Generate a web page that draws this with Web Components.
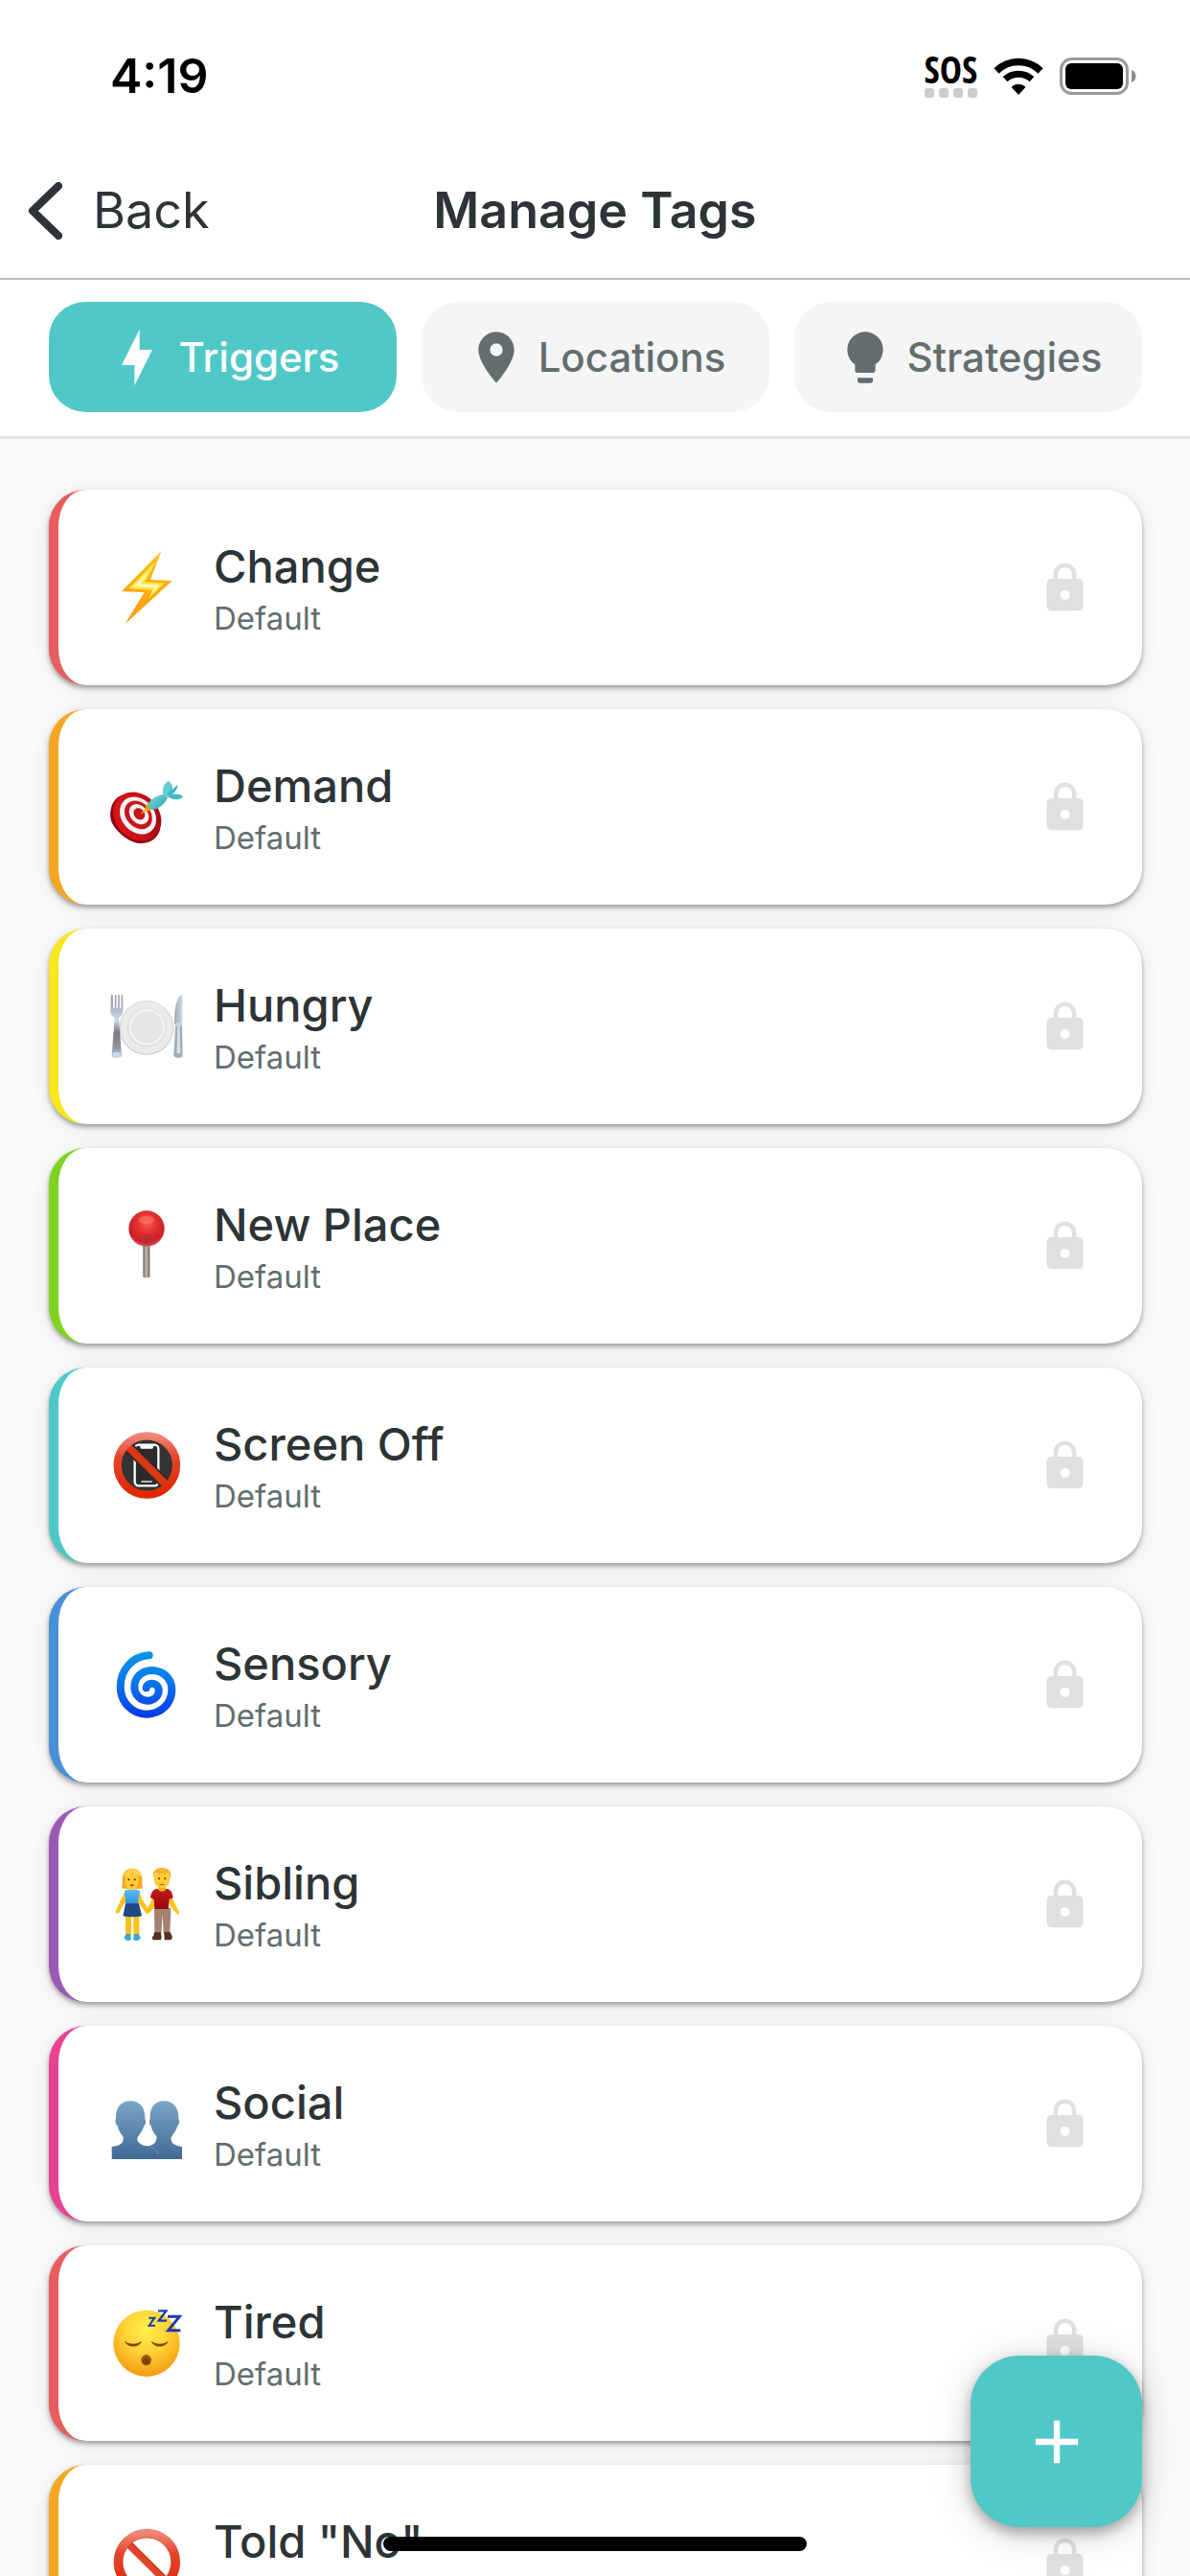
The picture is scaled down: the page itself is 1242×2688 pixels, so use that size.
<!DOCTYPE html>
<html lang="en">
<head>
<meta charset="utf-8">
<meta name="viewport" content="width=device-width, initial-scale=1">
<title>Manage Tags</title>
<style>
  body {
    margin: 0;
    background: #fafafa;
    color: #2d3436;
    font-family: Inter, Roboto, "Liberation Sans", sans-serif;
  }
</style>
</head>
<body>
<tags-app>
  <status-bar slot="top" time="4:19"></status-bar>
  <nav-header slot="top" back="Back">Manage Tags</nav-header>
  <tab-bar slot="top">
    <tab-pill selected>
      <svg slot="icon" viewBox="0 0 24 24"><path d="M11 15H6l7-14v8h5l-7 14z"/></svg>Triggers
    </tab-pill>
    <tab-pill>
      <svg slot="icon" viewBox="0 0 24 24"><path d="M12 2C8.13 2 5 5.13 5 9c0 5.25 7 13 7 13s7-7.75 7-13c0-3.87-3.13-7-7-7zm0 9.5a2.5 2.5 0 0 1 0-5 2.5 2.5 0 0 1 0 5z"/></svg>Locations
    </tab-pill>
    <tab-pill>
      <svg slot="icon" viewBox="0 0 24 24"><path d="M12 2a7 7 0 0 0-7 7c0 2.38 1.19 4.47 3 5.74V17a1 1 0 0 0 1 1h6a1 1 0 0 0 1-1v-2.26c1.81-1.27 3-3.36 3-5.74a7 7 0 0 0-7-7zM9 21a1 1 0 0 0 1 1h4a1 1 0 0 0 1-1v-1H9z"/></svg>Strategies
    </tab-pill>
  </tab-bar>

  <tag-card color="#e85d5d" note="Default">
    <svg slot="icon" viewBox="228 250 228 228">
      <defs><linearGradient id="bolt" x1="0" y1="0" x2="0" y2="1"><stop offset="0" stop-color="#ffc21a"/><stop offset="1" stop-color="#ff9200"/></linearGradient></defs>
      <path d="M388 250 264 376l71 3-60 99 147-135-68-3z" fill="url(#bolt)"/>
      <path d="M372 281 285 368l67 4-46 69 93-91-62-3z" fill="#ffe53d"/>
      <path d="M359 303 300 361l66 4-42 52 61-61-62-3z" fill="#fffab8"/>
      <path d="m351 375 11-7-14 34-54 55z" fill="#ffa51a"/>
    </svg>Change
  </tag-card>
  <tag-card color="#f5a623" note="Default">
    <svg slot="icon" viewBox="228 938 228 228">
      <defs>
        <linearGradient id="rim" x1="0" y1="0" x2="1" y2="1"><stop offset="0" stop-color="#e0161c"/><stop offset=".6" stop-color="#c20f16"/><stop offset="1" stop-color="#8c0a0d"/></linearGradient>
        <linearGradient id="dart" x1="0" y1="0" x2="1" y2="1"><stop offset="0" stop-color="#7fe0e6"/><stop offset="1" stop-color="#2a9ca6"/></linearGradient>
      </defs>
      <path d="M262 1016c-22 8-37 38-33 70 3 32 52 76 88 80 30 2 62-12 68-48z" fill="#8f0a10"/>
      <ellipse cx="313" cy="1082" rx="68" ry="83" transform="rotate(-42 313 1082)" fill="url(#rim)"/>
      <ellipse cx="315" cy="1079" rx="51" ry="64" transform="rotate(-42 315 1079)" fill="#f4f1f1"/>
      <ellipse cx="316" cy="1077" rx="38" ry="49" transform="rotate(-42 316 1077)" fill="#c9151c"/>
      <ellipse cx="318" cy="1075" rx="27" ry="35" transform="rotate(-42 318 1075)" fill="#f4f1f1"/>
      <ellipse cx="319" cy="1074" rx="16" ry="20" transform="rotate(-42 319 1074)" fill="#c9151c"/>
      <path d="m322 1075 24-27 9 9z" fill="#f2c200"/>
      <path d="m338 1052 8-12 16 17-12 7-7-1z" fill="#e0a800"/>
      <path d="M347 1042c10-18 32-28 49-30l12 10c-6 18-24 34-46 39-9-2-15-9-15-19z" fill="url(#dart)"/>
      <path d="M394 1010c-4-16 6-34 18-38 8 8 12 16 10 26l17-16c1 12-8 26-18 30 14-2 28 0 36 7-10 12-30 12-44 4z" fill="#43b9c3"/>
      <path d="M394 1010c-4-16 6-34 18-38 8 12 8 22-6 42z" fill="#65cfd8"/>
    </svg>Demand
  </tag-card>
  <tag-card color="#f8e71c" note="Default">
    <svg slot="icon" viewBox="228 246 228 228">
      <defs>
        <linearGradient id="steel" x1="0" y1="0" x2="0" y2="1"><stop offset="0" stop-color="#8d9299"/><stop offset=".4" stop-color="#c9dbec"/><stop offset=".6" stop-color="#77797d"/><stop offset=".85" stop-color="#94979b"/><stop offset="1" stop-color="#bcd0e6"/></linearGradient>
        <linearGradient id="blade" x1="0" y1="0" x2="1" y2="0"><stop offset="0" stop-color="#9cabb5"/><stop offset="1" stop-color="#cfdce6"/></linearGradient>
      </defs>
      <circle cx="342" cy="365" r="85" fill="#cfcfd1"/>
      <circle cx="342" cy="364" r="82" fill="#ebebec"/>
      <circle cx="342" cy="364" r="60" fill="#d5dbe6"/>
      <circle cx="343" cy="363" r="57" fill="#f5f5f5"/>
      <circle cx="343" cy="363" r="50" fill="#e6e6e6"/>
      <path d="M231 262h5l2 42h4l1-42h4l1 42h4l1-42h4l1 42h4l1-42h4l1 50c0 10-6 18-13 20l9 120c0 8-31 8-31 0l9-120c-8-3-13-10-13-20z" fill="url(#steel)"/>
      <ellipse cx="249" cy="448" rx="13" ry="8" fill="#c3d8ee"/>
      <path d="M454 260c-14 3-26 32-25 94h25z" fill="url(#blade)"/>
      <path d="M432 356h21l2 96c-2 8-26 8-28 0z" fill="#a3adb9"/>
      <path d="M439 360h6l3 84h-11z" fill="#d9e2ec"/>
      <ellipse cx="443" cy="354" rx="11" ry="7" fill="#bcd9f5"/>
    </svg>Hungry
  </tag-card>
  <tag-card color="#7ed321" note="Default">
    <svg slot="icon" viewBox="228 934 228 228">
      <defs>
        <radialGradient id="ball" cx=".5" cy=".35" r=".65"><stop offset="0" stop-color="#f9594e"/><stop offset=".45" stop-color="#e2302e"/><stop offset=".8" stop-color="#c8202a"/><stop offset="1" stop-color="#dd4a55"/></radialGradient>
        <linearGradient id="pin" x1="0" y1="0" x2="1" y2="0"><stop offset="0" stop-color="#6e625e"/><stop offset=".5" stop-color="#c9bdb8"/><stop offset="1" stop-color="#665a57"/></linearGradient>
      </defs>
      <path d="M331 1040h21v104c0 5-21 5-21 0z" fill="url(#pin)"/>
      <circle cx="342" cy="994" r="56" fill="url(#ball)"/>
      <ellipse cx="342" cy="967" rx="25" ry="13" fill="#ff8878" opacity=".45"/>
      <ellipse cx="342" cy="1026" rx="15" ry="17" fill="#a3383a" opacity=".5"/>
    </svg>New Place
  </tag-card>
  <tag-card color="#50c8c8" note="Default">
    <svg slot="icon" viewBox="228 242 228 228">
      <defs><linearGradient id="ring" gradientUnits="objectBoundingBox" x1="0" y1="0" x2="0" y2="1"><stop offset="0" stop-color="#ee8676"/><stop offset=".12" stop-color="#ec6f5c"/><stop offset=".35" stop-color="#e4452c"/><stop offset="1" stop-color="#e02600"/></linearGradient></defs>
      <circle cx="343" cy="356" r="92" fill="#333"/>
      <rect x="305" y="292" width="74" height="128" rx="12" fill="#2b2b2b" stroke="#fff" stroke-width="7"/>
      <path d="M320 294h45l-4 10h-37z" fill="#fff"/>
      <path d="M325 407h34" stroke="#fff" stroke-width="4"/>
      <path d="m279 293 127 126" stroke="#2b2b2b" stroke-width="34"/>
      <path d="m279 293 127 126" stroke="#dd3517" stroke-width="24"/>
      <circle cx="343" cy="356" r="92" fill="none" stroke="url(#ring)" stroke-width="25"/>
    </svg>Screen Off
  </tag-card>
  <tag-card color="#4a90d9" note="Default">
    <svg slot="icon" viewBox="228 930 228 228">
      <defs><linearGradient id="swirl" gradientUnits="userSpaceOnUse" x1="0" y1="940" x2="0" y2="1148"><stop offset="0" stop-color="#0b96e6"/><stop offset=".45" stop-color="#0a78ea"/><stop offset="1" stop-color="#0637ea"/></linearGradient></defs>
      <path d="M350 952C296 955 260 998 260 1050c0 48 36 86 82 86s79-34 79-77c0-36-29-60-63-60-31 0-54 22-54 52 0 24 18 43 41 43 20 0 35-14 35-32 0-13-10-22-22-22-10 0-16 6-17 14" fill="none" stroke="url(#swirl)" stroke-width="24" stroke-linecap="round"/>
    </svg>Sensory
  </tag-card>
  <tag-card color="#9b59b6" note="Default">
    <svg slot="icon" viewBox="228 238 228 228">
      <defs>
        <linearGradient id="shirt" x1="0" y1="0" x2="0" y2="1"><stop offset="0" stop-color="#c21a1c"/><stop offset="1" stop-color="#96080c"/></linearGradient>
        <linearGradient id="top" x1="0" y1="0" x2="0" y2="1"><stop offset="0" stop-color="#5cbcf0"/><stop offset="1" stop-color="#2f93d8"/></linearGradient>
      </defs>
      <path d="M276 385h18v66h-18zM301 385h18v66h-18z" fill="#fcc21b"/>
      <path d="M272 455l6-10h13l3 14c0 10-24 10-22-4zM300 459l3-14h13l7 10c2 14-23 14-23 4z" fill="#3ea6dd"/>
      <path d="M274 315c-10 16-20 38-29 60l4 7 9-6c8-18 18-30 24-42zM318 315c8 14 14 30 24 44l7 20-6 4-12-16c-10-14-18-26-22-34z" fill="#fcc21b"/>
      <path d="M272 312c4-6 14-6 24-6s22 0 26 6l-5 20-1 22h-40l-1-22z" fill="url(#top)"/>
      <path d="M276 350h42l9 39c-18 4-42 4-59 0z" fill="#224785"/>
      <path d="M264 300c4-8 0-26 4-38 4-16 16-22 28-22 20 0 30 14 32 30 1 12-2 22 2 30-8 6-58 6-66 0z" fill="#f6a91c"/>
      <ellipse cx="296" cy="280" rx="21" ry="26" fill="#ffcb38"/>
      <path d="M270 268c6-20 14-28 30-27 14 1 24 10 26 24-12-2-22-6-28-14-4 8-14 14-28 17z" fill="#ffd24f"/>
      <circle cx="286" cy="275" r="3" fill="#4a2a08"/><circle cx="305" cy="275" r="3" fill="#4a2a08"/>
      <ellipse cx="296" cy="293" rx="6" ry="3" fill="#b0441c"/>
      <path d="M366 364h52l-3 80h-20l-3-62-4 62h-21z" fill="#a5826e"/>
      <path d="M366 440h20l3 14-2 10h-22c-8-2-6-10-1-14zM397 440h19l6 12c2 8-2 12-8 12h-16z" fill="#53301f"/>
      <path d="M362 330c-6 12-10 24-18 34l2 18 8-6c8-10 16-22 20-32zM422 330c6 14 12 28 22 46l-3 9-12-11c-10-12-16-24-20-34z" fill="#fcc21b"/>
      <path d="M354 332c2-16 8-27 20-28h31c12 1 18 12 20 28l-12 5-3 30h-43l-2-30z" fill="url(#shirt)"/>
      <path d="M378 290h24v16c-6 8-18 8-24 0z" fill="#f0ad18"/>
      <ellipse cx="390" cy="274" rx="25" ry="28" fill="#ffcb38"/>
      <path d="M363 272c-4-22 6-35 28-34 22 0 30 14 25 34l-6-16c-12 2-30 2-40-2z" fill="#f5b52c"/>
      <circle cx="381" cy="272" r="3" fill="#4a2a08"/><circle cx="400" cy="272" r="3" fill="#4a2a08"/>
      <path d="M382 289q8 5 16 0" fill="none" stroke="#a8541c" stroke-width="3"/>
    </svg>Sibling
  </tag-card>
  <tag-card color="#e84393" note="Default">
    <svg slot="icon" viewBox="228 927 228 228">
      <defs><linearGradient id="bust" gradientUnits="userSpaceOnUse" x1="0" y1="970" x2="0" y2="1152"><stop offset="0" stop-color="#7ba5c6"/><stop offset="1" stop-color="#416a94"/></linearGradient></defs>
      <path d="M396 970c30 0 48 22 46 56 4 4 3 18-3 22-4 14-12 24-18 32-4 6-4 12 0 18 4 9 18 13 32 15v39H334v-39c12-1 30-4 36-15 3-6 4-12 3-18-8-8-14-18-17-32-6-4-7-18-3-22-2-34 13-56 43-56z" fill="url(#bust)"/>
      <path d="M291 970c30 0 48 22 46 56 4 4 3 18-3 22-4 14-12 24-18 32-4 6-4 12 0 18 8 12 24 12 40 16 12 4 20 14 22 38H233v-39c12-1 28-4 34-15 3-6 2-12 1-18-8-8-14-18-17-32-6-4-9-18-5-22-2-34 15-56 45-56z" fill="url(#bust)"/>
      <path d="M350 1112c14 3 24 12 28 26" fill="none" stroke="#7f9dba" stroke-width="2"/>
    </svg>Social
  </tag-card>
  <tag-card color="#e85d5d" note="Default">
    <svg slot="icon" viewBox="228 264 228 228">
      <defs>
        <radialGradient id="face" cx=".5" cy=".3" r=".7"><stop offset="0" stop-color="#fff04d"/><stop offset=".5" stop-color="#ffd133"/><stop offset="1" stop-color="#f39a12"/></radialGradient>
      </defs>
      <circle cx="342" cy="379" r="104" fill="url(#face)"/>
      <path d="M273 371c14 12 40 12 54 0-6 22-46 24-54 0zM356 371c14 12 40 12 54 0-6 22-46 24-54 0z" fill="#7d4a0c"/>
      <ellipse cx="341" cy="431" rx="16" ry="17" fill="#9a5a10"/>
      <ellipse cx="341" cy="435" rx="11" ry="10" fill="#7d430a"/>
      <g fill="none" stroke="#1b3cab" stroke-linejoin="miter">
        <path d="M349 299h18l-17 24h19" stroke-width="6"/>
        <path d="M378 277h25l-23 31h25" stroke-width="7"/>
        <path d="M408 295h37l-35 43h38" stroke-width="9"/>
      </g>
    </svg>Tired
  </tag-card>
  <tag-card color="#f5a623" note="Default">
    <svg slot="icon" viewBox="228 952 228 228">
      <path d="m279 1001 127 126" stroke="#e0452c" stroke-width="24"/>
      <path d="m283 995 127 126" stroke="#b93a25" stroke-width="3"/>
      <circle cx="343" cy="1064" r="90" fill="none" stroke="url(#ring)" stroke-width="28"/>
      <circle cx="343" cy="1064" r="76" fill="none" stroke="#b93a25" stroke-width="2"/>
    </svg>Told "No"
  </tag-card>

  <add-button slot="overlay" label="Add tag"></add-button>
  <home-indicator slot="overlay"></home-indicator>
</tags-app>

<script>
class ShadowElement extends HTMLElement {
  connectedCallback() {
    if (this.shadowRoot) return;
    this.attachShadow({ mode: "open" }).innerHTML = this.render();
  }
}

customElements.define("tags-app", class extends ShadowElement {
  render() {
    return `
      <style>
        :host { display: flex; flex-direction: column; position: relative; height: 100vh; overflow: hidden; background: #fafafa; }
        header { flex: none; background: #fff; border-bottom: 3px solid #e0e0e0; }
        main { flex: 1; min-height: 0; overflow: hidden; display: flex; flex-direction: column; gap: 25px; padding: 53px 50px 0 51px; }
      </style>
      <header><slot name="top"></slot></header>
      <main><slot></slot></main>
      <slot name="overlay"></slot>`;
  }
});

customElements.define("status-bar", class extends ShadowElement {
  render() {
    return `
      <style>
        :host { display: flex; justify-content: space-between; align-items: center; height: 158px; padding: 0 56px 0 115px; color: #000; }
        .time { font-size: 50px; font-weight: 600; line-height: 60px; }
        .icons { display: flex; align-items: center; gap: 17px; }
        .sos { display: flex; flex-direction: column; align-items: center; gap: 4px; }
        .sos b { font: bold 39px/32px "Liberation Sans Narrow", "Open Sans Condensed", "Roboto Condensed", Roboto, sans-serif; }
        .dots { display: flex; gap: 5px; }
        .dots i { width: 10px; height: 10px; border-radius: 3px; background: #ccc; }
        svg { display: block; }
      </style>
      <span class="time">${this.getAttribute("time")}</span>
      <div class="icons">
        <div class="sos"><b>SOS</b><span class="dots"><i></i><i></i><i></i><i></i></span></div>
        <svg width="52" height="39" viewBox="0 0 156 117">
          <path d="M78 117 56 93c11-13 33-13 44 0z"/>
          <path d="M36 68c24-22 60-22 84 0" fill="none" stroke="#000" stroke-width="21"/>
          <path d="M9 42c39-38 99-38 138 0" fill="none" stroke="#000" stroke-width="22"/>
        </svg>
        <svg width="80" height="39" viewBox="0 0 160 78">
          <rect x="3" y="3" width="138" height="72" rx="22" fill="none" stroke="#9a9a9a" stroke-width="6"/>
          <rect x="12" y="12" width="120" height="54" rx="12"/>
          <path d="M150 26c12 4 12 22 0 26z" fill="#8c8c8c"/>
        </svg>
      </div>`;
  }
});

customElements.define("nav-header", class extends ShadowElement {
  render() {
    return `
      <style>
        :host { display: grid; grid-template-columns: 1fr auto 1fr; align-items: center; height: 124px; padding-bottom: 8px; border-bottom: 2px solid #bdbdbd; }
        button { justify-self: start; display: flex; align-items: center; gap: 32px; margin: 0; padding: 0 29px; border: 0; background: none; color: inherit; font: inherit; font-size: 52px; line-height: 64px; }
        svg { display: block; }
        h1 { margin: 0; font-size: 52px; font-weight: 600; line-height: 64px; }
      </style>
      <button type="button">
        <svg width="36" height="60" viewBox="0 0 36 60"><path d="M32 4 5 30l27 26" fill="none" stroke="currentColor" stroke-width="8" stroke-linecap="round" stroke-linejoin="round"/></svg>
        ${this.getAttribute("back")}
      </button>
      <h1><slot></slot></h1>`;
  }
});

customElements.define("tab-bar", class extends ShadowElement {
  connectedCallback() {
    super.connectedCallback();
    this.setAttribute("role", "tablist");
  }
  render() {
    return `
      <style>
        :host { display: grid; grid-template-columns: repeat(3, 1fr); gap: 26px; padding: 23px 50px 25px 51px; }
      </style>
      <slot></slot>`;
  }
});

customElements.define("tab-pill", class extends ShadowElement {
  render() {
    return `
      <style>
        :host { display: block; }
        button { display: flex; align-items: center; justify-content: center; gap: 12px; width: 100%; height: 115px; margin: 0; padding: 0; border: 0; border-radius: 38px; background: #f5f5f5; color: #636e6e; font: inherit; font-size: 42px; font-weight: 500; line-height: 50px; }
        :host([selected]) button { background: #50c8c8; color: #fff; }
        ::slotted(svg) { display: block; width: 64px; height: 64px; fill: currentColor; }
      </style>
      <button type="button" role="tab" aria-selected="${this.hasAttribute("selected")}"><slot name="icon"></slot><span><slot></slot></span></button>`;
  }
});

customElements.define("tag-card", class extends ShadowElement {
  render() {
    return `
      <style>
        :host { display: flex; flex: none; align-items: center; gap: 32px; box-sizing: border-box; height: 204px; padding: 0 52px 0 54px; border-left: 10px solid ${this.getAttribute("color")}; border-radius: 38px; background: #fff; box-shadow: 0 3px 5px rgba(0,0,0,.34), 0 3px 26px rgba(0,0,0,.08); }
        ::slotted(svg) { display: block; flex: none; width: 76px; height: 76px; }
        .text { flex: 1; min-width: 0; }
        h2, p { margin: 0; }
        h2 { font-size: 47px; font-weight: 500; line-height: 64px; }
        p { font-size: 33px; line-height: 44px; color: #636e6e; }
        .lock { display: block; flex: none; width: 57px; height: 57px; fill: #e0e0e0; }
      </style>
      <slot name="icon"></slot>
      <div class="text"><h2><slot></slot></h2><p>${this.getAttribute("note")}</p></div>
      <svg class="lock" viewBox="0 0 24 24" role="img" aria-label="Locked"><path fill-rule="evenodd" d="M18 8h-1V6c0-2.760-2.240-5-5-5S7 3.240 7 6v2H6c-1.100 0-2 .900-2 2v10c0 1.100.900 2 2 2h12c1.100 0 2-.900 2-2V10c0-1.100-.900-2-2-2zm-6 9.200a2.100 2.100 0 1 1 0-4.200 2.100 2.100 0 0 1 0 4.200zM15.100 8H8.900V6a3.100 3.100 0 0 1 6.200 0z"/></svg>`;
  }
});

customElements.define("add-button", class extends ShadowElement {
  render() {
    return `
      <style>
        :host { position: absolute; right: 50px; bottom: 51px; }
        button { display: flex; align-items: center; justify-content: center; width: 179px; height: 179px; margin: 0; padding: 0; border: 0; border-radius: 51px; background: #50c8c8; color: #fff; box-shadow: 0 6px 14px rgba(0,0,0,.3), 0 6px 44px rgba(0,0,0,.16); }
      </style>
      <button type="button" aria-label="${this.getAttribute("label")}">
        <svg width="76" height="76" viewBox="0 0 24 24"><path fill="currentColor" d="M19 13h-6v6h-2v-6H5v-2h6V5h2v6h6z"/></svg>
      </button>`;
  }
});

customElements.define("home-indicator", class extends ShadowElement {
  render() {
    return `
      <style>
        :host { position: absolute; left: 0; right: 0; bottom: 26px; display: flex; justify-content: center; pointer-events: none; }
        i { width: 442px; height: 15px; border-radius: 8px; background: #000; }
      </style>
      <i></i>`;
  }
});
</script>
</body>
</html>
